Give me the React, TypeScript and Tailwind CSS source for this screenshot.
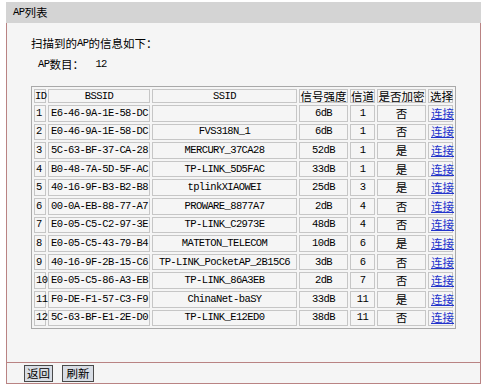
import React from 'react'

type Ap = {
  id: number
  bssid: string
  ssid: string
  signal: string
  channel: number
  secure: string
}

const aps: Ap[] = [
  { id: 1, bssid: 'E6-46-9A-1E-58-DC', ssid: '', signal: '6dB', channel: 1, secure: '否' },
  { id: 2, bssid: 'E0-46-9A-1E-58-DC', ssid: 'FVS318N_1', signal: '6dB', channel: 1, secure: '否' },
  { id: 3, bssid: '5C-63-BF-37-CA-28', ssid: 'MERCURY_37CA28', signal: '52dB', channel: 1, secure: '是' },
  { id: 4, bssid: 'B0-48-7A-5D-5F-AC', ssid: 'TP-LINK_5D5FAC', signal: '33dB', channel: 1, secure: '是' },
  { id: 5, bssid: '40-16-9F-B3-B2-B8', ssid: 'tplinkXIAOWEI', signal: '25dB', channel: 3, secure: '是' },
  { id: 6, bssid: '00-0A-EB-88-77-A7', ssid: 'PROWARE_8877A7', signal: '2dB', channel: 4, secure: '否' },
  { id: 7, bssid: 'E0-05-C5-C2-97-3E', ssid: 'TP-LINK_C2973E', signal: '48dB', channel: 4, secure: '否' },
  { id: 8, bssid: 'E0-05-C5-43-79-B4', ssid: 'MATETON_TELECOM', signal: '10dB', channel: 6, secure: '是' },
  { id: 9, bssid: '40-16-9F-2B-15-C6', ssid: 'TP-LINK_PocketAP_2B15C6', signal: '3dB', channel: 6, secure: '否' },
  { id: 10, bssid: 'E0-05-C5-86-A3-EB', ssid: 'TP-LINK_86A3EB', signal: '2dB', channel: 7, secure: '否' },
  { id: 11, bssid: 'F0-DE-F1-57-C3-F9', ssid: 'ChinaNet-baSY', signal: '33dB', channel: 11, secure: '是' },
  { id: 12, bssid: '5C-63-BF-E1-2E-D0', ssid: 'TP-LINK_E12ED0', signal: '38dB', channel: 11, secure: '否' },
]

// latin text is set in a mono face, CJK in Noto; never mix them in one cell
const mono = "font-['Liberation_Mono',monospace] text-[10.5px] tracking-[-0.6px]"
const cjk = "font-['Noto_Sans_CJK_SC',sans-serif] text-[11.5px]"
const cell = 'h-[16.6px] p-0 border border-[#c6c6c6] leading-[13px] whitespace-nowrap align-middle'
const head = 'h-[14px] p-0 border border-[#c6c6c6] leading-[11px] font-normal whitespace-nowrap align-middle'

export default function App() {
  return (
    <div className={`w-[486px] h-[392px] bg-white pt-[2px] pl-[6px] text-black ${cjk}`}>
      <div className="w-[475px]">
        <div className="h-[21px] bg-[#d4d4d4] pl-[7px] flex items-center">
          <span className={mono}>AP</span>
          <span>列表</span>
        </div>

        <div className="h-[339px] border-x border-[#b98383] bg-[#f5f5f5] pl-[24px] pt-[13px]">
          <div className="h-[16px] flex items-center">
            <span>扫描到的</span>
            <span className={mono}>AP</span>
            <span>的信息如下：</span>
          </div>
          <div className="mt-[5px] h-[16px] flex items-center pl-[7px]">
            <span className={mono}>AP</span>
            <span className="w-[46px]">数目：</span>
            <span className={mono}>12</span>
          </div>

          <table className="mt-[13px] w-[425px] table-fixed border-separate border-spacing-[2px] border border-[#a9a9a9]">
            <thead>
              <tr>
                <th className={`${head} ${mono} w-[12px] text-left`}>ID</th>
                <th className={`${head} ${mono} w-[102px] text-center`}>BSSID</th>
                <th className={`${head} ${mono} w-[145px] text-center`}>SSID</th>
                <th className={`${head} ${cjk} w-[49px] text-center`}>信号强度</th>
                <th className={`${head} ${cjk} w-[25px] text-center`}>信道</th>
                <th className={`${head} ${cjk} w-[49px] text-center`}>是否加密</th>
                <th className={`${head} ${cjk} w-[25px] text-left pl-[1px]`}>选择</th>
              </tr>
            </thead>
            <tbody>
              {aps.map((ap) => (
                <tr key={ap.id}>
                  <td className={`${cell} ${mono} pl-[1px] text-left`}>{ap.id}</td>
                  <td className={`${cell} ${mono} pl-[2px] text-left`}>{ap.bssid}</td>
                  <td className={`${cell} ${mono} text-center`}>{ap.ssid}</td>
                  <td className={`${cell} ${mono} text-center`}>{ap.signal}</td>
                  <td className={`${cell} ${mono} text-center`}>{ap.channel}</td>
                  <td className={`${cell} ${cjk} text-center`}>{ap.secure}</td>
                  <td className={`${cell} ${cjk} pl-[2px] text-left`}>
                    <a href="#" className="text-[#2233cc] underline">
                      连接
                    </a>
                  </td>
                </tr>
              ))}
            </tbody>
          </table>
        </div>

        <div className="h-[22px] border border-[#b98383] bg-[#f5f5f5] flex items-center gap-[9px] pl-[17px]">
          <button className="h-[17px] w-[29px] border border-[#4a4a4a] bg-[#d8dde5] leading-[15px]">返回</button>
          <button className="h-[17px] w-[32px] border border-[#4a4a4a] bg-[#d8dde5] leading-[15px]">刷新</button>
        </div>
      </div>
    </div>
  )
}
